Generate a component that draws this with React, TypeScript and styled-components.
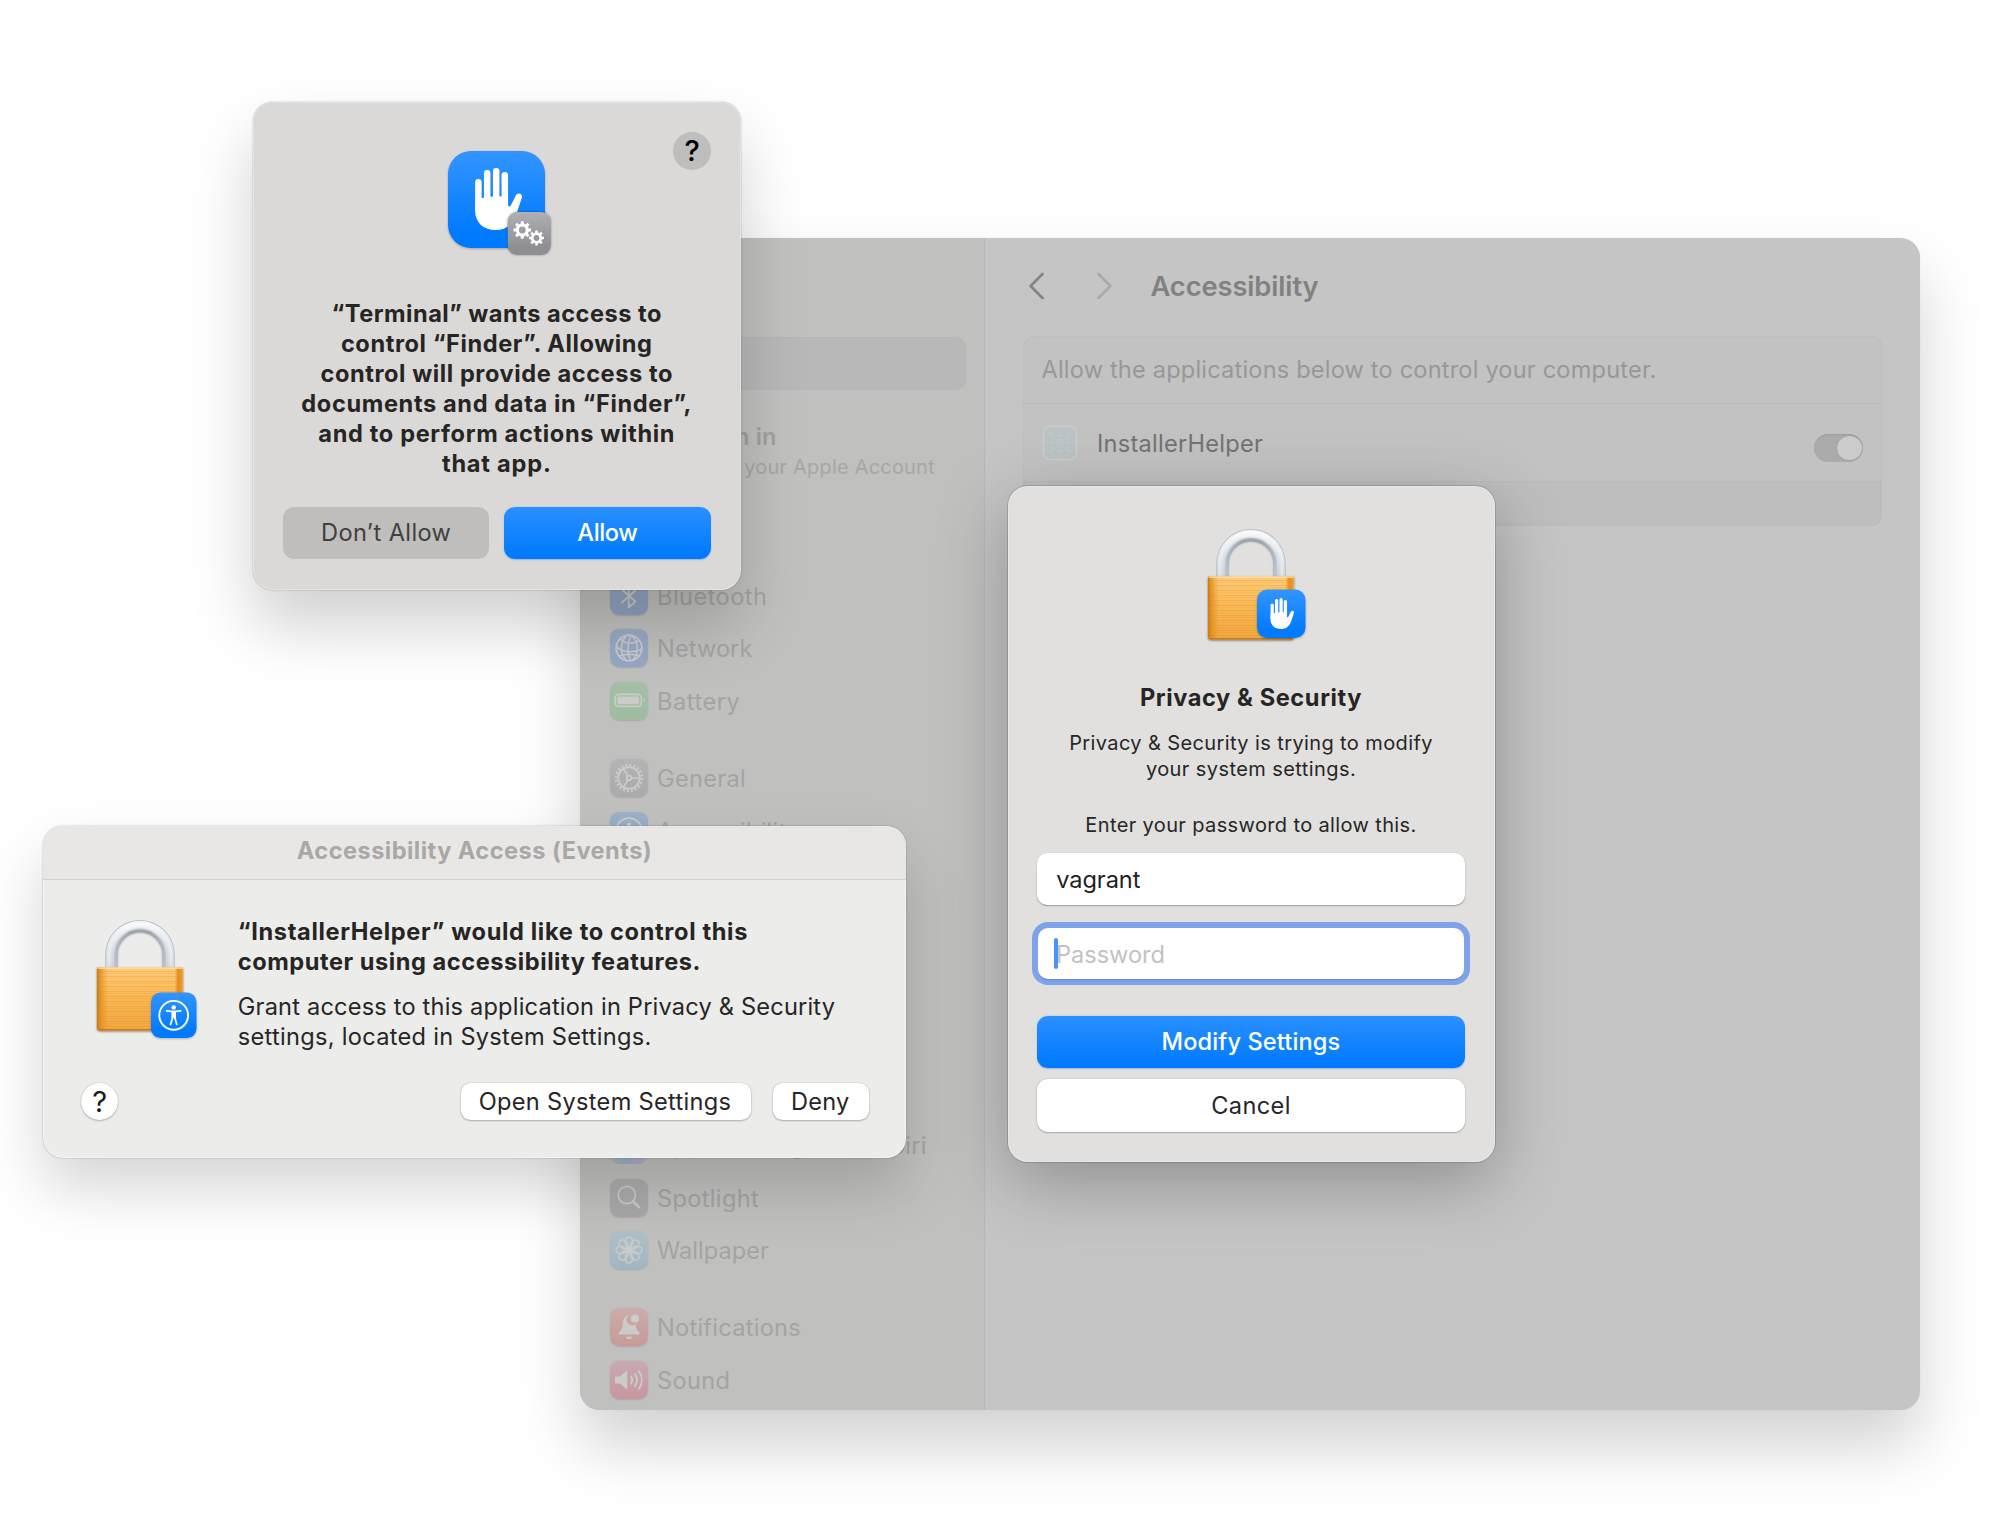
import React from "react";
import styled, { createGlobalStyle, css } from "styled-components";

const GlobalStyle = createGlobalStyle`
  *, *::before, *::after { box-sizing: border-box; }
  html, body { margin: 0; padding: 0; background: #fff; }
  body {
    font-family: Inter, "Liberation Sans", sans-serif;
    font-size: 23.6px;
    line-height: 30px;
    overflow: hidden;
  }
`;

const Desktop = styled.main`
  position: relative;
  width: 2000px;
  height: 1530px;
  overflow: hidden;
  background: #fff;
`;

const windowBase = css`
  position: absolute;
  border-radius: 20px;
  overflow: hidden;
`;

/* ---------- Text ---------- */

const Line = styled.span<{ $tracking?: number }>`
  display: block;
  padding-top: 1px;
  margin-bottom: -1px;
  white-space: nowrap;
  letter-spacing: ${(p) => p.$tracking ?? 0.3}px;
`;

type TextLine = [text: string, tracking: number];

const Lines = ({ lines }: { lines: TextLine[] }) => (
  <>
    {lines.map(([text, tracking]) => (
      <Line key={text} $tracking={tracking}>
        {text}
      </Line>
    ))}
  </>
);

/* ---------- Settings window ---------- */

const SettingsWindow = styled.section`
  ${windowBase}
  left: 580px;
  top: 238px;
  width: 1340px;
  height: 1172px;
  display: flex;
  background: #c5c5c5;
  box-shadow: 0 36px 64px rgba(0, 0, 0, 0.18), 0 0 1px rgba(0, 0, 0, 0.15);
`;

const Sidebar = styled.aside`
  flex: none;
  width: 405px;
  display: flex;
  flex-direction: column;
  padding-top: 99px;
  background: #c0c0be;
  border-right: 1px solid #b7b7b6;
`;

const SearchField = styled.div`
  flex: none;
  height: 53px;
  margin: 0 18px 0 19px;
  border-radius: 11px;
  background: #b8b8b8;
  border: 1px solid #b5b5b5;
`;

const Account = styled.div`
  flex: none;
  margin: 31.4px 0 0 118px;
  color: #a0a09f;
`;

const AccountTitle = styled.div`
  font-weight: 600;
`;

const AccountHint = styled.div`
  margin-top: 2px;
  font-size: 20px;
  line-height: 26px;
  color: #a7a7a5;
`;

const SidebarGroup = styled.ul<{ $gap: number }>`
  flex: none;
  display: flex;
  flex-direction: column;
  gap: 14.5px;
  margin: ${(p) => p.$gap}px 0 0 30px;
  padding: 0;
  list-style: none;
`;

const SidebarItem = styled.li`
  display: flex;
  align-items: center;
  gap: 9px;
  height: 38px;
  color: #a4a4a3;
`;

const Tile = styled.span<{ $from: string; $to: string }>`
  flex: none;
  width: 38px;
  height: 38px;
  border-radius: 9px;
  background: linear-gradient(${(p) => p.$from}, ${(p) => p.$to});
  box-shadow: 0 0.5px 1.5px rgba(0, 0, 0, 0.12);
  svg { display: block; }
`;

const GLYPH = "#cbcbca";

const Glyph = ({ children }: { children: React.ReactNode }) => (
  <svg
    width="38"
    height="38"
    viewBox="0 0 38 38"
    fill="none"
    stroke={GLYPH}
    strokeWidth="1.7"
    strokeLinecap="round"
    strokeLinejoin="round"
  >
    {children}
  </svg>
);

const BluetoothGlyph = () => (
  <Glyph>
    <path d="M12 12.5 25.3 24.5 18.7 30.6V7.4L25.3 13.5 12 25.5" />
  </Glyph>
);

const NetworkGlyph = () => (
  <Glyph>
    <circle cx="19" cy="19" r="12.8" />
    <path d="M20.8 6.4C17.5 14 17.4 24 20.3 31.6M17 6.4C9.8 13 9.5 25 16.3 31.4M21.5 6.5C29 13 29.3 24.5 22.5 31.2M10.3 10C14 15 24 15.6 28.8 11.2M6.4 17.6C13 24 25 24 31.7 19.8M9.3 27C15 24.8 23.5 24.8 29 27" strokeWidth="1.5" />
  </Glyph>
);

const BatteryGlyph = () => (
  <Glyph>
    <rect x="5.3" y="12.3" width="26" height="12" rx="3.4" />
    <rect x="7.4" y="14.4" width="21.8" height="7.8" rx="1.6" fill={GLYPH} stroke="none" />
    <path d="M33.4 16.2v4.2c1.9-.7 1.9-3.5 0-4.2Z" fill={GLYPH} stroke="none" />
  </Glyph>
);

const GeneralGlyph = () => (
  <Glyph>
    <circle cx="19" cy="19" r="10.8" />
    <circle cx="19" cy="19" r="13" strokeWidth="2.4" strokeLinecap="butt" strokeDasharray="2.04 2.04" />
    <circle cx="19" cy="19" r="2.3" />
    <path d="M21.5 19h8M17.8 17l-4.3-7.4M17.8 21l-4.3 7.4" />
  </Glyph>
);

const AccessibilityGlyph = () => (
  <Glyph>
    <circle cx="19" cy="19" r="12.8" />
    <circle cx="19" cy="12.6" r="1.9" fill={GLYPH} stroke="none" />
    <path d="M12.5 16.3l4.7 1v4L15.3 27M25.5 16.3l-4.7 1v4l1.9 5.7M17.5 17.5h3" />
  </Glyph>
);

const SearchGlyph = () => (
  <Glyph>
    <circle cx="16.8" cy="16" r="8.6" />
    <path d="M23 22.3l6.2 6" strokeWidth="2.4" />
  </Glyph>
);

const WallpaperGlyph = () => (
  <Glyph>
    {[0, 45, 90, 135, 180, 225, 270, 315].map((angle) => (
      <g key={angle} transform={`rotate(${angle} 19 19)`}>
        <path d="M19 19 17.2 12.4A3.4 3.4 0 1 1 20.8 12.4Z" strokeWidth="1.4" />
      </g>
    ))}
    <circle cx="19" cy="19" r="3" strokeWidth="1.2" />
  </Glyph>
);

const BellGlyph = () => (
  <Glyph>
    <path
      d="M18.8 6.9C15 7.8 13.2 10.8 12.9 15c-.3 4.8-1.2 6.6-3.6 8.8-1.4 1.4-1 2.6.8 2.6h18c1.8 0 2.2-1.2.8-2.6-2-2-3-3.8-3.4-7.6A5.6 5.6 0 0 1 18.8 6.9Z"
      fill={GLYPH}
      stroke="none"
    />
    <path d="M15.6 28.7h6.8c-.8 3.2-6 3.2-6.8 0Z" fill={GLYPH} stroke="none" />
    <circle cx="25" cy="10.7" r="4.1" fill={GLYPH} stroke="none" />
  </Glyph>
);

const SoundGlyph = () => (
  <Glyph>
    <path d="M6 15.4h4.2l6-5.3c.6-.5 1-.3 1 .4v17c0 .7-.4.9-1 .4l-6-5.3H6c-.8 0-1-.3-1-1v-5.2c0-.7.2-1 1-1Z" fill={GLYPH} stroke="none" />
    <path d="M21.2 15.6c1.3 2 1.3 4.8 0 6.8M25 13c2.5 3.6 2.5 8.4 0 12M29 10.3c3.7 5.3 3.7 12.1 0 17.4" strokeWidth="2" />
  </Glyph>
);

type Item = {
  label: string;
  tracking: number;
  from?: string;
  to?: string;
  glyph?: React.ReactNode;
};

const sidebarGroups: { gap: number; items: Item[] }[] = [
  {
    gap: 97.5,
    items: [
      { label: "Bluetooth", tracking: 0.45, from: "#97a8c4", to: "#90a1bf", glyph: <BluetoothGlyph /> },
      { label: "Network", tracking: 0.1, from: "#9aabc6", to: "#96a8c6", glyph: <NetworkGlyph /> },
      { label: "Battery", tracking: 0.55, from: "#a5bfa7", to: "#9ebc9f", glyph: <BatteryGlyph /> },
    ],
  },
  {
    gap: 39.5,
    items: [
      { label: "General", tracking: 0.3, from: "#b4b4b4", to: "#aaaaaa", glyph: <GeneralGlyph /> },
      { label: "Accessibility", tracking: 0.2, from: "#9db1ca", to: "#96a8c6", glyph: <AccessibilityGlyph /> },
    ],
  },
  {
    gap: 276.5,
    items: [
      { label: "Apple Intelligence & Siri", tracking: 0.24 },
      { label: "Spotlight", tracking: 0.34, from: "#adadad", to: "#a8a8a9", glyph: <SearchGlyph /> },
      { label: "Wallpaper", tracking: 0.02, from: "#b0c0c7", to: "#a1b6c2", glyph: <WallpaperGlyph /> },
    ],
  },
  {
    gap: 39,
    items: [
      { label: "Notifications", tracking: 0.25, from: "#cbaca9", to: "#c79b98", glyph: <BellGlyph /> },
      { label: "Sound", tracking: 0.35, from: "#c9a9b1", to: "#c8969f", glyph: <SoundGlyph /> },
    ],
  },
];

const SiriTile = styled.span`
  flex: none;
  width: 38px;
  height: 38px;
  border-radius: 9px;
  background: linear-gradient(90deg, #a9b9c6, #9bb4c6 45%, #b3abc8 80%, #c4a9c2);
`;

const Content = styled.div`
  flex: 1;
  display: flex;
  flex-direction: column;
`;

const ContentHeader = styled.header`
  display: flex;
  align-items: center;
  height: 96px;
  padding-left: 44px;
`;

const Chevron = styled.svg<{ $gap: number }>`
  flex: none;
  margin-right: ${(p) => p.$gap}px;
`;

const ContentTitle = styled.h1`
  margin: 0;
  font-size: 27.3px;
  line-height: 34px;
  font-weight: 600;
  color: #818181;
`;

const Panel = styled.div`
  margin: 1.5px 38px 0 37.5px;
  border-radius: 11px;
  background: #c2c2c2;
  box-shadow: inset 0 0 0 1.3px #bebebe;
  overflow: hidden;
`;

const PanelRow = styled.div<{ $height: number; $last?: boolean }>`
  display: flex;
  align-items: center;
  height: ${(p) => p.$height}px;
  padding: 0 19px;
  border-bottom: ${(p) => (p.$last ? "none" : "1.5px solid #bbbbbb")};
  background: ${(p) => (p.$last ? "rgba(0, 0, 0, 0.018)" : "transparent")};
`;

const PanelNote = styled.div`
  color: #989898;
`;

const AppName = styled.div`
  flex: 1;
  margin-left: 19.5px;
  color: #727272;
`;

const Toggle = styled.div`
  display: flex;
  justify-content: flex-end;
  align-items: center;
  width: 49px;
  height: 28px;
  margin-top: 11px;
  padding-right: 1.5px;
  border-radius: 14px;
  background: #ababab;
  box-shadow: inset 0 1px 1.5px rgba(0, 0, 0, 0.08);
`;

const Knob = styled.div`
  width: 24.5px;
  height: 24.5px;
  border-radius: 50%;
  background: #cbcbcb;
  box-shadow: 0 0 1.5px rgba(0, 0, 0, 0.2);
`;

const BlueprintIcon = () => (
  <svg width="36" height="36" viewBox="0 0 36 36" fill="none">
    <rect x="0.8" y="0.8" width="34.4" height="34.4" rx="7.5" fill="#cacccd" />
    <rect x="2.5" y="2.5" width="31" height="31" rx="5.5" fill="#b8c1c4" />
    <g stroke="#c2c8c9" strokeWidth="0.7">
      <path d="M2.5 10h31M2.5 18h31M2.5 26h31M10 2.5v31M18 2.5v31M26 2.5v31M4 4l28 28M32 4 4 32" />
      <circle cx="18" cy="18" r="13.5" />
      <circle cx="18" cy="18" r="8" />
      <circle cx="18" cy="18" r="4" />
    </g>
  </svg>
);

/* ---------- Shared icon artwork ---------- */

const BlueSquareRect = styled.rect`
  filter: drop-shadow(0 1px 1px rgba(0, 0, 0, 0.25));
`;

const GreySquareRect = styled.rect`
  filter: drop-shadow(0 0.5px 1px rgba(0, 0, 0, 0.4));
`;

const BlueSquare = ({ id, size, radius }: { id: string; size: number; radius: number }) => (
  <>
    <defs>
      <linearGradient id={id} x1="0" y1="0" x2="0" y2="1">
        <stop offset="0" stopColor="#3395ff" />
        <stop offset="0.85" stopColor="#007aff" />
      </linearGradient>
    </defs>
    <BlueSquareRect width={size} height={size} rx={radius} fill={`url(#${id})`} />
  </>
);

const Hand = () => (
  <g fill="#fff" stroke="none">
    <path
      d="M30.4 31.3V58M39.2 22.2V56M48.2 20.2V56M56.8 24.2V56"
      stroke="#fff"
      strokeWidth="6.5"
      strokeLinecap="round"
    />
    <path d="M27.15 49 33 47.3 41 45.7 50 45.3 60.05 46V54.5Q61.4 56.8 62.9 54.2L67.8 44.4C69.7 41 75.2 42.5 73.8 46.8L68.7 62.3C65 73.5 58.3 79 47.5 79 35 79 27.15 71 27.15 60Z" />
  </g>
);

const gearPath = (r: number, inner: number, teeth: number) => {
  const points: string[] = [];
  for (let i = 0; i < teeth; i++) {
    const step = (Math.PI * 2) / teeth;
    [
      [-0.3, inner],
      [-0.2, r],
      [0.2, r],
      [0.3, inner],
    ].forEach(([offset, radius]) => {
      const a = (i + offset) * step - Math.PI / 2;
      points.push(`${(Math.cos(a) * radius).toFixed(2)} ${(Math.sin(a) * radius).toFixed(2)}`);
    });
  }
  return `M${points.join("L")}Z`;
};

const Gear = ({ x, y, r }: { x: number; y: number; r: number }) => {
  const hole = r * 0.38;
  return (
    <g transform={`translate(${x} ${y})`}>
      <path
        d={`${gearPath(r, r * 0.74, 8)}M${hole} 0A${hole} ${hole} 0 1 0 ${-hole} 0A${hole} ${hole} 0 1 0 ${hole} 0Z`}
        fill="#fff"
        fillRule="evenodd"
      />
    </g>
  );
};

const AutomationIcon = () => (
  <svg width="97" height="97" viewBox="0 0 97 97" overflow="visible">
    <BlueSquare id="automation-blue" size={97} radius={23} />
    <Hand />
    <defs>
      <linearGradient id="gear-grey" x1="0" y1="0" x2="0" y2="1">
        <stop offset="0" stopColor="#b0b0b4" />
        <stop offset="0.8" stopColor="#8e8e93" />
      </linearGradient>
    </defs>
    <g transform="translate(59.7 61)">
      <GreySquareRect width="43" height="43" rx="9.5" fill="url(#gear-grey)" />
      <Gear x={14.6} y={18} r={8.9} />
      <Gear x={28.8} y={26} r={7.6} />
    </g>
  </svg>
);

const LockBody = styled.path`
  filter: drop-shadow(0 1px 0.8px rgba(60, 40, 10, 0.6));
`;

const Padlock = ({ id, children }: { id: string; children: React.ReactNode }) => (
  <svg width="86" height="111" viewBox="0 0 86 111" overflow="visible">
    <defs>
      <linearGradient id={`${id}-body`} x1="0" y1="0" x2="0" y2="1">
        <stop offset="0" stopColor="#ffcb7a" />
        <stop offset="0.45" stopColor="#fab956" />
        <stop offset="1" stopColor="#f2a53d" />
      </linearGradient>
      <linearGradient id={`${id}-sides`} x1="0" y1="0" x2="1" y2="0">
        <stop offset="0" stopColor="#c8730a" stopOpacity="0.95" />
        <stop offset="0.03" stopColor="#d88312" stopOpacity="0.75" />
        <stop offset="0.13" stopColor="#e89220" stopOpacity="0" />
        <stop offset="0.9" stopColor="#e89220" stopOpacity="0" />
        <stop offset="0.94" stopColor="#e5860c" stopOpacity="0.85" />
        <stop offset="0.98" stopColor="#e08a1c" stopOpacity="0.8" />
        <stop offset="1" stopColor="#f0b050" stopOpacity="0.8" />
      </linearGradient>
      <pattern id={`${id}-brush`} width="86" height="5" patternUnits="userSpaceOnUse">
        <rect y="1" width="86" height="1" fill="#d98a20" opacity="0.28" />
        <rect y="3.2" width="86" height="0.8" fill="#d98a20" opacity="0.16" />
      </pattern>
      <linearGradient id={`${id}-steel`} x1="0" y1="0" x2="0" y2="50" gradientUnits="userSpaceOnUse">
        <stop offset="0" stopColor="#f6f8fb" />
        <stop offset="0.5" stopColor="#dfe4e9" />
        <stop offset="1" stopColor="#cdd3d9" />
      </linearGradient>
      <linearGradient id={`${id}-shade`} x1="0" y1="8" x2="0" y2="50" gradientUnits="userSpaceOnUse">
        <stop offset="0" stopColor="#7f8890" />
        <stop offset="0.35" stopColor="#a3abb3" />
        <stop offset="1" stopColor="#b4bbc2" />
      </linearGradient>
      <filter id={`${id}-soft`} x="-20%" y="-20%" width="140%" height="140%">
        <feGaussianBlur stdDeviation="1.1" />
      </filter>
    </defs>
    <g fill="none">
      <path d="M14.5 49V34.8a28.5 28.5 0 0 1 57 0V49" stroke="#b6bdc5" strokeWidth="12.6" />
      <path d="M14.5 49V34.8a28.5 28.5 0 0 1 57 0V49" stroke={`url(#${id}-steel)`} strokeWidth="10.8" />
      <path d="M19 48V34.8a24 24 0 0 1 48 0V48" stroke={`url(#${id}-shade)`} strokeWidth="3" filter={`url(#${id}-soft)`} />
      <path d="M12 48V34.8a31 31 0 0 1 62 0V48" stroke="#fff" strokeOpacity="0.6" strokeWidth="2" filter={`url(#${id}-soft)`} />
    </g>
    <LockBody d="M0 47.5H86V107.5Q86 110.5 83 110.5H3Q0 110.5 0 107.5Z" fill={`url(#${id}-body)`} />
    <path d="M0 49H86V108H0Z" fill={`url(#${id}-brush)`} />
    <path d="M0 47.5H86V107.5Q86 110.5 83 110.5H3Q0 110.5 0 107.5Z" fill={`url(#${id}-sides)`} />
    <path d="M0.5 48.2H85.5" stroke="#ffe0a6" strokeWidth="1.3" />
    <path d="M2 109.7H84" stroke="#b9701a" strokeWidth="1" />
    {children}
  </svg>
);

/* ---------- Controls ---------- */

const HelpButton = styled.div<{ $plain?: boolean }>`
  display: flex;
  align-items: center;
  justify-content: center;
  width: 37.5px;
  height: 37.5px;
  padding: 1px 0 0 1px;
  border-radius: 50%;
  font-size: 29px;
  font-weight: ${(p) => (p.$plain ? 500 : 400)};
  color: ${(p) => (p.$plain ? "#000" : "#1c1c1c")};
  background: ${(p) => (p.$plain ? "#bfbebc" : "#fff")};
  box-shadow: ${(p) => (p.$plain ? "none" : "0 0 1.5px rgba(0,0,0,0.22), 0 1px 2px rgba(0,0,0,0.22)")};
`;

const WideButton = styled.div<{ $kind: "primary" | "plain" | "muted" }>`
  flex: 1 1 0;
  display: flex;
  align-items: center;
  justify-content: center;
  min-height: 52.5px;
  border-radius: 11px;
  ${Line} {
    padding-top: 0;
    margin-bottom: 0;
  }
  ${(p) =>
    p.$kind === "primary" &&
    css`
      color: #fff;
      font-weight: 500;
      background: linear-gradient(#2b90ff, #007aff 95%);
      box-shadow: 0 0.5px 1.5px rgba(0, 90, 220, 0.3);
    `}
  ${(p) =>
    p.$kind === "plain" &&
    css`
      color: #262626;
      background: #fff;
      box-shadow: 0 0 1.5px rgba(0, 0, 0, 0.22), 0 1px 1.5px rgba(0, 0, 0, 0.22);
    `}
  ${(p) =>
    p.$kind === "muted" &&
    css`
      color: #41403f;
      background: #bfbebc;
    `}
`;

/* ---------- Automation prompt ---------- */

const AutomationDialog = styled.section`
  ${windowBase}
  left: 253px;
  top: 102px;
  width: 487.5px;
  height: 487.5px;
  display: flex;
  flex-direction: column;
  align-items: center;
  padding: 49.4px 30px 30px;
  background: #dad9d7;
  box-shadow: 0 36px 64px rgba(0, 0, 0, 0.19), 0 0 1.5px rgba(0, 0, 0, 0.4),
    inset 0 0 0 1px rgba(255, 255, 255, 0.3);
`;

const CornerHelp = styled.div`
  position: absolute;
  top: 30px;
  right: 30px;
`;

const Headline = styled.h2<{ $gap: number }>`
  margin: ${(p) => p.$gap}px 0 0;
  font-size: 23.6px;
  line-height: 30px;
  font-weight: 700;
  color: #262524;
`;

const ButtonPair = styled.div`
  display: flex;
  gap: 15px;
  width: 100%;
  margin-top: 29px;
`;

const CenteredText = styled.div`
  text-align: center;
`;

/* ---------- Accessibility prompt ---------- */

const AccessDialog = styled.section`
  ${windowBase}
  left: 43px;
  top: 826px;
  width: 863px;
  height: 331.5px;
  display: flex;
  flex-direction: column;
  background: #ececea;
  box-shadow: 0 30px 60px rgba(0, 0, 0, 0.17), 0 0 1.5px rgba(0, 0, 0, 0.4),
    inset 0 0 0 1px rgba(255, 255, 255, 0.4);
`;

const TitleBar = styled.header`
  flex: none;
  height: 54px;
  padding-top: 9.4px;
  text-align: center;
  font-weight: 700;
  color: #a9a8a7;
  background: #e8e7e5;
  border-bottom: 1.5px solid #d2d1cf;
`;

const AccessBody = styled.div`
  display: flex;
  padding: 36.4px 0 0 54.2px;
`;

const LockSlot = styled.div`
  flex: none;
  width: 140.6px;
  padding-top: 3.6px;
  svg { display: block; }
`;

const Message = styled.p`
  margin: 15px 0 0;
  color: #262626;
`;

const AccessFooter = styled.footer`
  display: flex;
  align-items: center;
  margin-top: 31.5px;
  padding: 0 37.5px;
`;

const SmallButton = styled.div<{ $width: number; $push?: boolean }>`
  display: flex;
  align-items: center;
  justify-content: center;
  width: ${(p) => p.$width}px;
  height: 37.5px;
  margin-left: ${(p) => (p.$push ? "auto" : "22.5px")};
  padding-right: 1px;
  border-radius: 9.5px;
  color: #262626;
  background: #fff;
  box-shadow: 0 0 1.5px rgba(0, 0, 0, 0.22), 0 1px 2px rgba(0, 0, 0, 0.24);
  ${Line} {
    padding-top: 0;
    margin-bottom: 0;
  }
`;

/* ---------- Password prompt ---------- */

const PasswordDialog = styled.section`
  ${windowBase}
  left: 1007.5px;
  top: 485.5px;
  width: 487px;
  height: 676.5px;
  display: flex;
  flex-direction: column;
  padding: 43.5px 29.7px 30px;
  text-align: center;
  color: #262626;
  background: #e1e0de;
  box-shadow: 0 0 0 1px rgba(0, 0, 0, 0.14), 0 20px 70px rgba(0, 0, 0, 0.28),
    inset 0 0 0 1px rgba(255, 255, 255, 0.25);
  svg { display: block; margin: 0 auto; flex: none; }
`;

const SmallText = styled.div<{ $gap: number }>`
  margin-top: ${(p) => p.$gap}px;
  font-size: 20px;
  line-height: 26.3px;
`;

const Field = styled.div<{ $focused?: boolean }>`
  flex: none;
  display: flex;
  align-items: center;
  height: ${(p) => (p.$focused ? 51 : 52.5)}px;
  margin: ${(p) => (p.$focused ? "22.7px 1px 0" : "15.1px 0 0")};
  padding-left: ${(p) => (p.$focused ? 16 : 19)}px;
  border-radius: 10px;
  color: ${(p) => (p.$focused ? "#c2c2c2" : "#1f1f1f")};
  background: #fff;
  box-shadow: ${(p) =>
    p.$focused
      ? "0 1.5px 0 #6a8fd6, 0 0 0 6px #7fa3eb"
      : "0 0 1px rgba(0,0,0,0.15), 0 1px 1.5px rgba(0,0,0,0.3)"};
`;

const Caret = styled.span`
  flex: none;
  width: 3.8px;
  height: 31px;
  margin-right: -2px;
  border-radius: 2px;
  background: #4a93ff;
  z-index: 1;
`;

const ButtonStack = styled.div`
  display: flex;
  flex-direction: column;
  gap: 11px;
  margin-top: 36.8px;
`;

export default function App() {
  return (
    <>
      <GlobalStyle />
      <Desktop>
        <SettingsWindow>
          <Sidebar>
            <SearchField />
            <Account>
              <AccountTitle>
                <Line $tracking={0.2}>Sign in</Line>
              </AccountTitle>
              <AccountHint>
                <Line $tracking={0.2}>with your Apple Account</Line>
              </AccountHint>
            </Account>
            {sidebarGroups.map((group, i) => (
              <SidebarGroup key={i} $gap={group.gap}>
                {group.items.map((item) => (
                  <SidebarItem key={item.label}>
                    {item.from && item.to ? (
                      <Tile $from={item.from} $to={item.to}>
                        {item.glyph}
                      </Tile>
                    ) : (
                      <SiriTile />
                    )}
                    <Line $tracking={item.tracking}>{item.label}</Line>
                  </SidebarItem>
                ))}
              </SidebarGroup>
            ))}
          </Sidebar>
          <Content>
            <ContentHeader>
              <Chevron $gap={53} width="15" height="28" viewBox="0 0 15 28" fill="none" stroke="#848484" strokeWidth="2.6" strokeLinecap="round" strokeLinejoin="round">
                <path d="M13.5 2 1.6 14 13.5 26" />
              </Chevron>
              <Chevron $gap={38.5} width="15" height="28" viewBox="0 0 15 28" fill="none" stroke="#a9a9a9" strokeWidth="2.6" strokeLinecap="round" strokeLinejoin="round">
                <path d="M1.5 2 13.4 14 1.5 26" />
              </Chevron>
              <ContentTitle>
                <Line $tracking={-0.1}>Accessibility</Line>
              </ContentTitle>
            </ContentHeader>
            <Panel>
              <PanelRow $height={68.5}>
                <PanelNote>
                  <Line $tracking={0.18}>Allow the applications below to control your computer.</Line>
                </PanelNote>
              </PanelRow>
              <PanelRow $height={78}>
                <BlueprintIcon />
                <AppName>
                  <Line $tracking={0.25}>InstallerHelper</Line>
                </AppName>
                <Toggle>
                  <Knob />
                </Toggle>
              </PanelRow>
              <PanelRow $height={43.5} $last />
            </Panel>
          </Content>
        </SettingsWindow>

        <AutomationDialog>
          <CornerHelp>
            <HelpButton $plain>?</HelpButton>
          </CornerHelp>
          <AutomationIcon />
          <CenteredText>
            <Headline $gap={49.6}>
              <Lines
                lines={[
                  ["“Terminal” wants access to", 0.5],
                  ["control “Finder”. Allowing", 0.58],
                  ["control will provide access to", 0.57],
                  ["documents and data in “Finder”,", 0.62],
                  ["and to perform actions within", 0.65],
                  ["that app.", 0.78],
                ]}
              />
            </Headline>
          </CenteredText>
          <ButtonPair>
            <WideButton $kind="muted">
              <Line $tracking={0.36}>Don’t Allow</Line>
            </WideButton>
            <WideButton $kind="primary">
              <Line $tracking={-0.4}>Allow</Line>
            </WideButton>
          </ButtonPair>
        </AutomationDialog>

        <AccessDialog>
          <TitleBar>
            <Line $tracking={0.45}>Accessibility Access (Events)</Line>
          </TitleBar>
          <AccessBody>
            <LockSlot>
              <Padlock id="access-lock">
                <g transform="translate(54 72.5)">
                  <BlueSquare id="access-blue" size={45.5} radius={9.5} />
                  <g fill="none" stroke="#fff">
                    <circle cx="22.7" cy="22.8" r="14.4" strokeWidth="1.9" />
                    <circle cx="22.7" cy="14.9" r="2.2" fill="#fff" stroke="none" />
                    <path
                      d="M15.6 18.4 20.8 18.9H24.6L29.8 18.4M19.6 32 21.4 25.7M25.8 32 24 25.7"
                      strokeWidth="1.7"
                      strokeLinecap="round"
                    />
                    <path d="M20.4 18.6H25V25.5L24.2 27.3 22.7 25 21.2 27.3 20.4 25.5Z" fill="#fff" stroke="none" />
                  </g>
                </g>
              </Padlock>
            </LockSlot>
            <div>
              <Headline $gap={0}>
                <Lines
                  lines={[
                    ["“InstallerHelper” would like to control this", 0.65],
                    ["computer using accessibility features.", 0.55],
                  ]}
                />
              </Headline>
              <Message>
                <Lines
                  lines={[
                    ["Grant access to this application in Privacy & Security", 0.19],
                    ["settings, located in System Settings.", 0.29],
                  ]}
                />
              </Message>
            </div>
          </AccessBody>
          <AccessFooter>
            <HelpButton>?</HelpButton>
            <SmallButton $width={290} $push>
              <Line $tracking={0.31}>Open System Settings</Line>
            </SmallButton>
            <SmallButton $width={95.5}>
              <Line $tracking={0.21}>Deny</Line>
            </SmallButton>
          </AccessFooter>
        </AccessDialog>

        <PasswordDialog>
          <Padlock id="password-lock">
            <g transform="translate(49 60.5)">
              <BlueSquare id="password-blue" size={48.5} radius={10.5} />
              <g transform="scale(0.5)">
                <Hand />
              </g>
            </g>
          </Padlock>
          <Headline $gap={42}>
            <Line $tracking={0.6}>Privacy & Security</Line>
          </Headline>
          <SmallText $gap={17.2}>
            <Lines
              lines={[
                ["Privacy & Security is trying to modify", 0.39],
                ["your system settings.", 0.42],
              ]}
            />
          </SmallText>
          <SmallText $gap={29.7}>
            <Line $tracking={0.37}>Enter your password to allow this.</Line>
          </SmallText>
          <Field>
            <Line $tracking={-0.07}>vagrant</Line>
          </Field>
          <Field $focused>
            <Caret />
            <Line $tracking={-0.03}>Password</Line>
          </Field>
          <ButtonStack>
            <WideButton $kind="primary">
              <Line $tracking={0.12}>Modify Settings</Line>
            </WideButton>
            <WideButton $kind="plain">
              <Line $tracking={0.37}>Cancel</Line>
            </WideButton>
          </ButtonStack>
        </PasswordDialog>
      </Desktop>
    </>
  );
}
